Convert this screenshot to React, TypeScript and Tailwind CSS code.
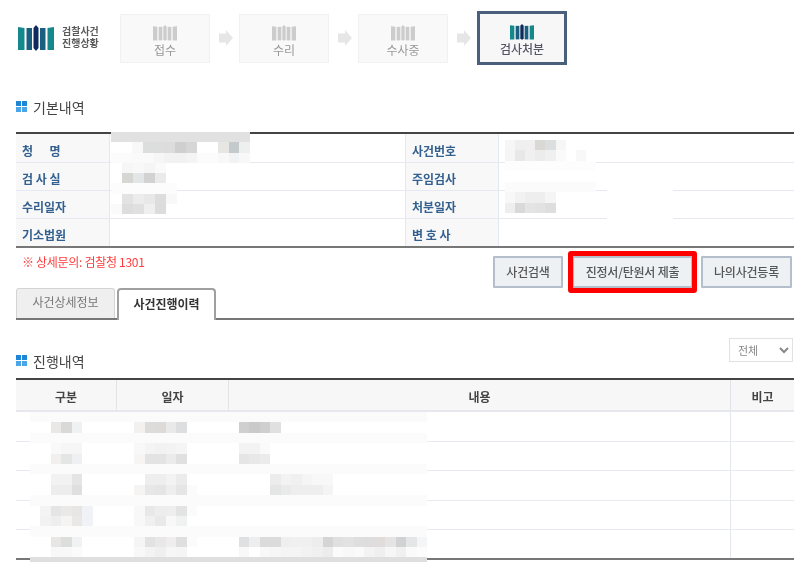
import React from "react";

type Seg = [number, number, string[]];

function Mosaic({ className, gridClass, total, cells }: { className: string; gridClass: string; total: number; cells: Seg[] }) {
  const map: Record<number, string> = {};
  cells.forEach(([r, c, colors]) => colors.forEach((col, i) => { map[r * 100 + c + i] = col; }));
  const rows = Math.floor(total / 100);
  const cols = total % 100;
  const out: React.ReactNode[] = [];
  for (let r = 0; r < rows; r++) {
    for (let c = 0; c < cols; c++) {
      out.push(<div key={r * 100 + c} style={{ backgroundColor: map[r * 100 + c] || "#ffffff" }} />);
    }
  }
  return <div className={`absolute grid ${gridClass} ${className}`}>{out}</div>;
}

const rep = (s: string, n: number) => Array.from({ length: n }, () => s);

function Bars({ active, className }: { active?: boolean; className: string }) {
  const colors = active ? ["#15888c", "#1a5f80", "#0f2a5c", "#1a5f80", "#15888c"] : ["#cccccc", "#cccccc", "#cccccc", "#cccccc", "#cccccc"];
  return (
    <svg viewBox="0 0 36 26" className={className} preserveAspectRatio="none">
      <path d="M0 2 L6.5 3 V25 L0 25 Z" fill={colors[0]} />
      <path d="M8.5 3 L14 3 V25 H8.5 Z" fill={colors[1]} />
      <path d="M15.5 3 L18 0 L20.5 3 V23 L18 26 L15.5 23 Z" fill={colors[2]} />
      <path d="M22 3 L27.5 3 V25 H22 Z" fill={colors[3]} />
      <path d="M29.5 3 L36 2 V25 H29.5 Z" fill={colors[4]} />
    </svg>
  );
}

function Arrow() {
  return (
    <svg viewBox="0 0 14 16" className="ml-[9px] mr-[6px] h-4 w-[14px] shrink-0">
      <path d="M0 3.5 H7 V0 L14 8 L7 16 V12.5 H0 Z" fill="#e6e6e6" />
    </svg>
  );
}

function Step({ label }: { label: string }) {
  return (
    <div className="flex h-[49px] w-[90px] shrink-0 flex-col items-center border border-[#f1f1f1] bg-[#f9f9f9] pt-[10px]">
      <Bars className="h-4 w-6" />
      <span className="mt-px text-[12px] leading-[16px] text-[#999999]">{label}</span>
    </div>
  );
}

function Heading({ children }: { children: React.ReactNode }) {
  return (
    <div className="flex items-center gap-[6px]">
      <div className="mb-[2px] grid h-[11px] w-[11px] grid-cols-2 gap-px">
        <div className="bg-[#1e86d6]" />
        <div className="bg-[#1e86d6]" />
        <div className="bg-[#4ba5e6]" />
        <div className="bg-[#4ba5e6]" />
      </div>
      <h2 className="text-[14px] leading-[20px] text-[#444444]">{children}</h2>
    </div>
  );
}

function InfoRow({ a, b, h = "h-[28px]", last }: { a: string; b: string; h?: string; last?: boolean }) {
  const border = last ? "" : "border-b border-[#e6e9ef]";
  return (
    <div className={`grid ${h} grid-cols-[94px_295px_94px_295px] ${border}`}>
      <div className="flex items-center whitespace-pre border-r border-[#e3e7ee] bg-[#f8f8f8] pl-[6px] pt-[5px] text-[12px] font-bold text-[#33608f]">{a}</div>
      <div />
      <div className="flex items-center whitespace-pre border-x border-[#e3e7ee] bg-[#f8f8f8] pl-[6px] pt-[5px] text-[12px] font-bold text-[#33608f]">{b}</div>
      <div />
    </div>
  );
}

function ActionButton({ label, className, children }: { label: string; className: string; children?: React.ReactNode }) {
  return (
    <button className={`relative h-[32px] rounded-[1px] border-2 border-[#b4bfcb] bg-[#edf1f4] text-[12px] font-medium tracking-[-0.2px] text-[#555555] ${className}`}>
      {label}
      {children}
    </button>
  );
}

const historyCols = "grid-cols-[101px_112px_502px_63px]";

function HistoryRow({ last }: { last?: boolean }) {
  const border = last ? "border-b-2 border-[#777777]" : "border-b border-[#e8eaef]";
  return (
    <div className={`grid h-[29.6px] ${historyCols} ${border}`}>
      <div className="border-r border-[#e8eaef]" />
      <div className="border-r border-[#e8eaef]" />
      <div className="border-r border-[#e3e6ec]" />
      <div />
    </div>
  );
}

const F = "#fbfbfb";
const band = (r: number): Seg => [r, 0, rep(F, 38)];

export default function App() {
  return (
    <div className="relative h-[568px] w-[800px] overflow-hidden bg-white pl-4 pr-[6px] blur-[0.35px] font-['Noto_Sans_CJK_KR','Noto_Sans',sans-serif]">
      {/* progress header */}
      <div className="mt-[11px] flex h-[54px] items-center">
        <Bars active className="ml-[2px] h-[26px] w-[36px] shrink-0" />
        <div className="mb-[2px] ml-2 w-[38px] shrink-0 whitespace-nowrap text-[10px] font-bold leading-[12px] text-[#5a5a5a]">
          <div>검찰사건</div>
          <div>진행상황</div>
        </div>
        <div className="ml-[20px] flex items-center">
          <Step label="접수" />
          <Arrow />
          <Step label="수리" />
          <Arrow />
          <Step label="수사중" />
          <Arrow />
          <div className="flex h-[54px] w-[90px] shrink-0 flex-col items-center border-[3px] border-[#4a5f7c] bg-[#f7f7f8] pt-[10px]">
            <Bars active className="h-4 w-6" />
            <span className="mt-px text-[12px] font-medium leading-[16px] text-[#555566]">검사처분</span>
          </div>
        </div>
      </div>

      {/* 기본내역 */}
      <div className="mt-[32px]">
        <Heading>기본내역</Heading>
      </div>
      <div className="mt-[15px] border-b-2 border-t-2 border-b-[#777777] border-t-[#444444]">
        <InfoRow a={"청      명"} b="사건번호" h="h-[29px]" />
        <InfoRow a="검 사 실" b="주임검사" />
        <InfoRow a="수리일자" b="처분일자" />
        <InfoRow a="기소법원" b="변 호 사" h="h-[27px]" last />
      </div>

      <div className="flex h-[40px] items-start justify-between">
        <p className="ml-[6px] mt-[5px] text-[12px] leading-[18px] tracking-[-0.3px] text-[#ff3b3b]">※ 상세문의: 검찰청 1301</p>
        <div className="mr-[2px] mt-[8px] flex gap-[8px]">
          <ActionButton label="사건검색" className="w-[70px]" />
          <ActionButton label="진정서/탄원서 제출" className="ml-px w-[121px]">
            <span className="pointer-events-none absolute -bottom-[7px] -left-[6px] -right-[6px] -top-[7px] rounded-[3px] border-[5px] border-[#ff0000]" />
          </ActionButton>
          <ActionButton label="나의사건등록" className="w-[91px]" />
        </div>
      </div>

      {/* tabs */}
      <div className="flex h-[32px] items-end gap-[2px] border-b-2 border-[#777777]">
        <div className="flex h-[30px] w-[99px] items-center justify-center rounded-t-[3px] border border-b-0 border-[#d4d4d4] bg-[#efefef] pb-[3px] text-[12px] text-[#777777]">사건상세정보</div>
        <div className="-mb-[2px] flex h-[32px] w-[99px] items-center justify-center rounded-t-[4px] border-x-2 border-t-2 border-[#a0a0a0] bg-white pb-[3px] text-[12px] font-bold text-[#333333]">사건진행이력</div>
      </div>

      {/* 진행내역 */}
      <div className="flex h-[58px] items-start justify-between">
        <div className="mt-[31px]">
          <Heading>진행내역</Heading>
        </div>
        <select defaultValue="전체" className="mr-px mt-[18px] h-[24px] w-[64px] border border-[#e2e2e2] bg-white pl-[4px] text-[11px] text-[#888888] outline-none">
          <option>전체</option>
        </select>
      </div>
      <div className="border-t-2 border-[#444444]">
        <div className={`grid h-[32px] ${historyCols} border-b-2 border-[#e6e8ee] bg-[#f7f7f7] text-[12px] font-bold text-[#444444]`}>
          <div className="flex items-center justify-center border-r border-[#e3e3e3] pt-[3px]">구분</div>
          <div className="flex items-center justify-center border-r border-[#e3e3e3] pt-[3px]">일자</div>
          <div className="flex items-center justify-center border-r border-[#dfe2e8] pt-[3px]">내용</div>
          <div className="flex items-center justify-center pt-[3px]">비고</div>
        </div>
        <HistoryRow />
        <HistoryRow />
        <HistoryRow />
        <HistoryRow />
        <HistoryRow last />
      </div>

      {/* redaction mosaics over the data */}
      <Mosaic
        className="left-[111px] top-[132px] h-[31px] w-[139px]"
        gridClass="grid-cols-[repeat(13,1fr)] grid-rows-3"
        total={313}
        cells={[
          [0, 0, rep("#e1e1e1", 13)],
          [1, 2, ["#f8f8f8", "#dcdedd", "#dcdedd", "#dcdcdc", "#cfcfcf", "#d6d6d6"]],
          [1, 10, ["#e6e6e3", "#c4c9cc", "#eef0f0"]],
          [2, 0, ["#fbfbfb", "#fbfbfb", "#fafafa", "#fafafa", "#f6f6f6", "#f2f2f2", "#f2f2f2", "#f4f4f4", "#fbfbfb", "#fbfbfb", "#f8f8f8", "#f2f3f4", "#f8f8f8"]],
        ]}
      />
      <Mosaic
        className="left-[111px] top-[163px] h-[51px] w-[66px]"
        gridClass="grid-cols-[repeat(6,1fr)] grid-rows-5"
        total={506}
        cells={[
          [0, 1, ["#f6f6f6", "#f8f8f8", "#f5f5f5", "#fafafa"]],
          [1, 1, ["#d6d6d2", "#e3e6e6", "#d2d2d2", "#eaeaea"]],
          [2, 0, rep("#fcfcfc", 6)],
          [3, 1, ["#e4e2e2", "#ececec", "#e8e8e8", "#dedcdd", "#f8f8f8"]],
          [4, 0, ["#fafafa", "#dedddd", "#e0e0e0", "#efefef", "#dcdcdc"]],
        ]}
      />
      <Mosaic
        className="left-[505px] top-[140px] h-[73px] w-[91px]"
        gridClass="grid-cols-[repeat(9,1fr)] grid-rows-7"
        total={709}
        cells={[
          [0, 0, ["#f6f6f6", "#efefef", "#f0f0f0", "#d9d8d4", "#dbdfdf", "#f6f6f6"]],
          [1, 0, ["#f5f5f5", "#e8e8e8", "#f0f0f0", "#ececec", "#f0f0f0", "#fafafa", "#ffffff", "#f8f8f8"]],
          [2, 0, rep("#fdfdfd", 9)],
          [4, 0, rep("#fbfbfb", 9)],
          [5, 0, ["#f8f8f8", "#f2f2f2", "#eeeeee", "#eeeeee", "#f5f5f5"]],
          [6, 0, ["#eeeeee", "#d9d9d9", "#e4e4e4", "#e2e2e2", "#dedede"]],
        ]}
      />
      <div className="absolute left-[607px] top-[190px] h-[29px] w-[66px] bg-white" />
      <Mosaic
        className="left-[30px] top-[412px] h-[151px] w-[397px]"
        gridClass="grid-cols-[repeat(38,1fr)] grid-rows-[repeat(14,10.4px)_5px]"
        total={1538}
        cells={[
          band(0), band(2), band(5), band(8), band(11),
          [1, 2, ["#eae8e6", "#d9d9d7", "#f0f1f3"]],
          [1, 10, ["#f3f1f0", "#dcdcdc", "#dcdbda", "#e9e9e9", "#dcdedf"]],
          [1, 20, ["#cfcfcf", "#cacaca", "#cfcfcf", "#e0e0e0"]],
          [3, 2, ["#f9f9f9", "#f6f6f6", "#f6f6f6"]],
          [3, 10, ["#f8f8f8", "#f4f4f4", "#f2f2f2", "#f3f3f3", "#f5f5f5"]],
          [3, 20, ["#f3f3f3", "#f3f3f3", "#fafafa"]],
          [4, 2, ["#f2f0ee", "#e4e6e5", "#eff0f2"]],
          [4, 10, ["#f6f5f4", "#e3e3e3", "#e3e3e3", "#ebebeb", "#e0e0e0"]],
          [4, 20, ["#e5e5e5", "#e8e8e8", "#ebebeb"]],
          [6, 2, ["#f2f2f2", "#f2f2f2", "#e5e5e5"]],
          [6, 11, ["#eeeeee", "#eeeeee", "#f3f3f3", "#ebebeb"]],
          [6, 23, ["#ececec", "#f3f3f3", "#f0f0f0", "#f5f5f5", "#f8f8f8", "#f8f8f8"]],
          [7, 2, ["#ededed", "#ededed", "#dfdfdf"]],
          [7, 10, ["#f5f4f3", "#e7e7e7", "#e5e5e5", "#eeeeee", "#e5e5e5", "#fbfbfb"]],
          [7, 23, ["#e4e6e6", "#eaeaea", "#eeeeee", "#eeeeee", "#eeeeee", "#f4f4f4"]],
          [9, 1, ["#f4f4f4", "#e5e5e5", "#ebe9e8", "#e8e6e4", "#f0f2f5"]],
          [9, 10, ["#f8f8f8", "#e8e8e8", "#ededed", "#eeeeee", "#e3e3e3", "#fbfbfb"]],
          [10, 1, ["#f2f2f2", "#eeeeee", "#f4f4f4", "#e9e8e6", "#f0f2f5"]],
          [10, 10, ["#f8f8f8", "#f0f0f0", "#e9e9e9", "#f8f8f8", "#f0f1f1"]],
          [12, 2, ["#e8e6e4", "#dcdedc", "#f0f2f4"]],
          [12, 10, ["#f6f5f5", "#e2e2e2", "#e9e7e7", "#eeeeee", "#dfdfdf", "#fbfbfb"]],
          [12, 20, ["#dfe0e2", "#eeeeee", "#dbdbdb", "#dbdbdb", "#efefef", "#f0f0f0", "#f0f0f0", "#ededed", "#d5d5d5", "#e0e0e0", "#e2e2e2", "#dedede", "#dedcdc", "#e0dcdc", "#e5e3e3", "#d0d2d4", "#e5e7e7", "#f4f5f6"]],
          [13, 2, ["#f8f8f8", "#f8f8f8", "#fbfbfb"]],
          [13, 10, ["#f8f8f8", "#f3f3f3", "#efefef", "#f6f6f6", "#f5f5f5"]],
          [13, 20, ["#f8f8f8", "#ffffff", "#f8f8f8", "#f6f6f6", "#f4f4f4", "#f4f4f4", "#f2f2f2", "#f0f0f0", "#ececec", "#fbfbfb", "#f8f8f8", "#fafafa", "#f3f3f3", "#efefef", "#f6f6f6", "#f0f0f0", "#fafafa", "#fcfcfc"]],
          [14, 0, rep("#dfdfdf", 38)],
        ]}
      />
    </div>
  );
}
